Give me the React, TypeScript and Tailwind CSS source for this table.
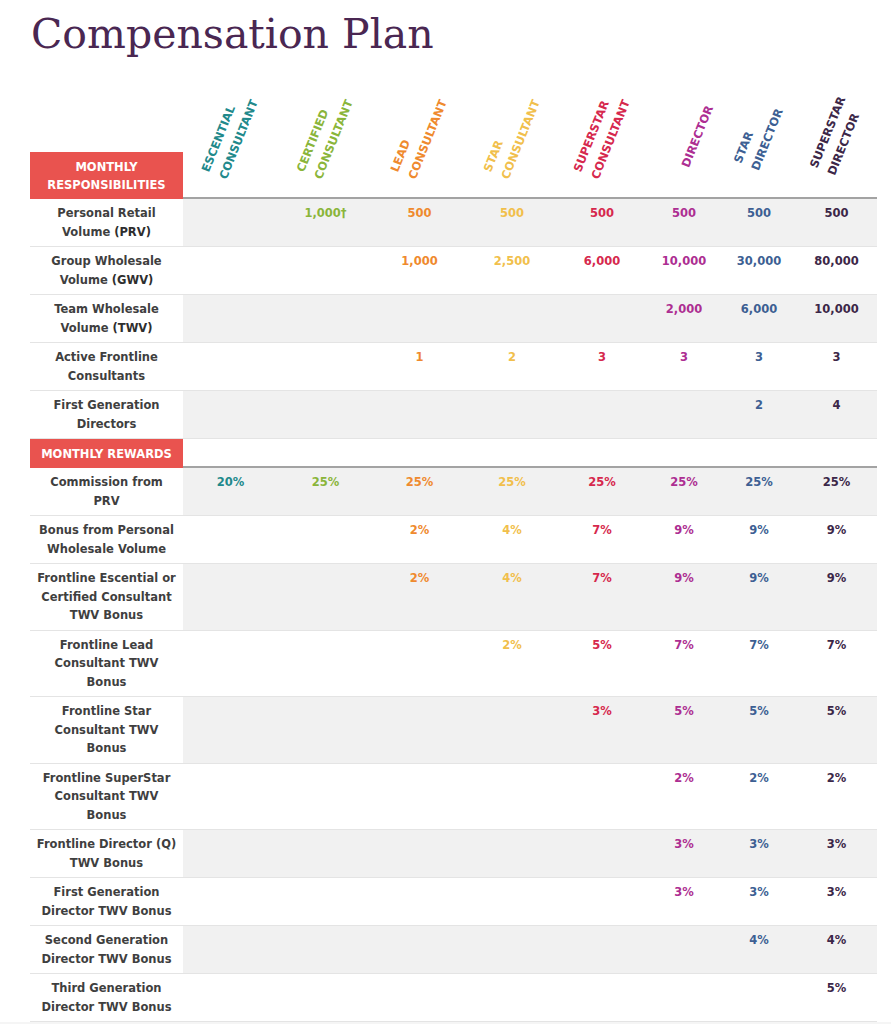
const columns = [
  { lines: ["ESCENTIAL", "CONSULTANT"], color: "text-[#21898b]", shift: "" },
  { lines: ["CERTIFIED", "CONSULTANT"], color: "text-[#8ab53a]", shift: "" },
  { lines: ["LEAD", "CONSULTANT"], color: "text-[#ef8a2e]", shift: "" },
  { lines: ["STAR", "CONSULTANT"], color: "text-[#f1bf4c]", shift: "" },
  { lines: ["SUPERSTAR", "CONSULTANT"], color: "text-[#d6284d]", shift: "" },
  { lines: ["DIRECTOR"], color: "text-[#ad2e92]", shift: "translate-x-[14px]" },
  { lines: ["STAR", "DIRECTOR"], color: "text-[#3d5f93]", shift: "" },
  { lines: ["SUPERSTAR", "DIRECTOR"], color: "text-[#3c2748]", shift: "" },
];

type Row = { label: [string, string?][]; values: string[] };

// label lines: [plain text, bolder suffix]
const responsibilities: Row[] = [
  { label: [["Personal Retail"], ["Volume ", "(PRV)"]], values: ["", "1,000†", "500", "500", "500", "500", "500", "500"] },
  { label: [["Group Wholesale"], ["Volume ", "(GWV)"]], values: ["", "", "1,000", "2,500", "6,000", "10,000", "30,000", "80,000"] },
  { label: [["Team Wholesale"], ["Volume ", "(TWV)"]], values: ["", "", "", "", "", "2,000", "6,000", "10,000"] },
  { label: [["Active Frontline"], ["Consultants"]], values: ["", "", "1", "2", "3", "3", "3", "3"] },
  { label: [["First Generation"], ["Directors"]], values: ["", "", "", "", "", "", "2", "4"] },
];

const rewards: Row[] = [
  { label: [["Commission from"], ["PRV"]], values: ["20%", "25%", "25%", "25%", "25%", "25%", "25%", "25%"] },
  { label: [["Bonus from Personal"], ["Wholesale Volume"]], values: ["", "", "2%", "4%", "7%", "9%", "9%", "9%"] },
  { label: [["Frontline Escential or"], ["Certified Consultant"], ["TWV Bonus"]], values: ["", "", "2%", "4%", "7%", "9%", "9%", "9%"] },
  { label: [["Frontline Lead"], ["Consultant TWV"], ["Bonus"]], values: ["", "", "", "2%", "5%", "7%", "7%", "7%"] },
  { label: [["Frontline Star"], ["Consultant TWV"], ["Bonus"]], values: ["", "", "", "", "3%", "5%", "5%", "5%"] },
  { label: [["Frontline SuperStar"], ["Consultant TWV"], ["Bonus"]], values: ["", "", "", "", "", "2%", "2%", "2%"] },
  { label: [["Frontline Director (Q)"], ["TWV Bonus"]], values: ["", "", "", "", "", "3%", "3%", "3%"] },
  { label: [["First Generation"], ["Director TWV Bonus"]], values: ["", "", "", "", "", "3%", "3%", "3%"] },
  { label: [["Second Generation"], ["Director TWV Bonus"]], values: ["", "", "", "", "", "", "4%", "4%"] },
  { label: [["Third Generation"], ["Director TWV Bonus"]], values: ["", "", "", "", "", "", "", "5%"] },
];

const grid = "grid grid-cols-[153px_95px_95px_93px_92px_88px_76px_74px_81px]";

function TableRow({ row, shaded }: { row: Row; shaded: boolean }) {
  return (
    <div className={`${grid} border-b border-[#e4e4e4]`}>
      <div className="bg-white py-[5px] text-center leading-[18.5px] text-[#3f3f3f]">
        {row.label.map(([text, strong], i) => (
          <div key={i} className="whitespace-nowrap">
            {text}
            {strong && <span className="font-black text-[#2e2e2e]">{strong}</span>}
          </div>
        ))}
      </div>
      {row.values.map((v, i) => (
        <div
          key={i}
          className={`py-[5px] text-center leading-[18.5px] ${columns[i].color} ${shaded ? "bg-[#f1f1f1]" : "bg-white"}`}
        >
          {v}
        </div>
      ))}
    </div>
  );
}

function SectionHeader({ title, tall }: { title: string[]; tall?: boolean }) {
  return (
    <div className={`${grid} ${tall ? "h-[141px]" : "h-[29px]"}`}>
      <div className="flex items-end">
        <div
          className={`flex w-full flex-col items-center justify-center bg-[#e9534f] leading-[18px] text-white ${tall ? "h-[47px]" : "h-[29px]"}`}
        >
          {title.map((t) => (
            <div key={t}>{t}</div>
          ))}
        </div>
      </div>
      {columns.map((c, i) => (
        <div
          key={i}
          className={`flex items-center justify-center border-b-2 border-[#a3a3a3] ${tall ? "pt-[17px]" : ""}`}
        >
          {tall && (
            <div className={`-rotate-[68deg] whitespace-nowrap text-left text-[11.5px] leading-[19px] ${c.color} ${c.shift}`}>
              {c.lines.map((l) => (
                <div key={l}>{l}</div>
              ))}
            </div>
          )}
        </div>
      ))}
    </div>
  );
}

export default function App() {
  return (
    <div className="min-h-screen bg-white font-['DejaVu_Sans',sans-serif]">
      <h1 className="pt-[10px] pl-[31px] font-['DejaVu_Serif',serif] text-[41px] font-normal leading-[48px] text-[#4a2752]">
        Compensation Plan
      </h1>

      <div className="ml-[30px] w-[847px] text-[11.5px] font-bold">
        <SectionHeader title={["MONTHLY", "RESPONSIBILITIES"]} tall />
        {responsibilities.map((r, i) => (
          <TableRow key={i} row={r} shaded={i % 2 === 0} />
        ))}
        <SectionHeader title={["MONTHLY REWARDS"]} />
        {rewards.map((r, i) => (
          <TableRow key={i} row={r} shaded={i % 2 === 0} />
        ))}
      </div>
      <div className="h-[20px] bg-[#f5f5f5]" />
    </div>
  );
}
